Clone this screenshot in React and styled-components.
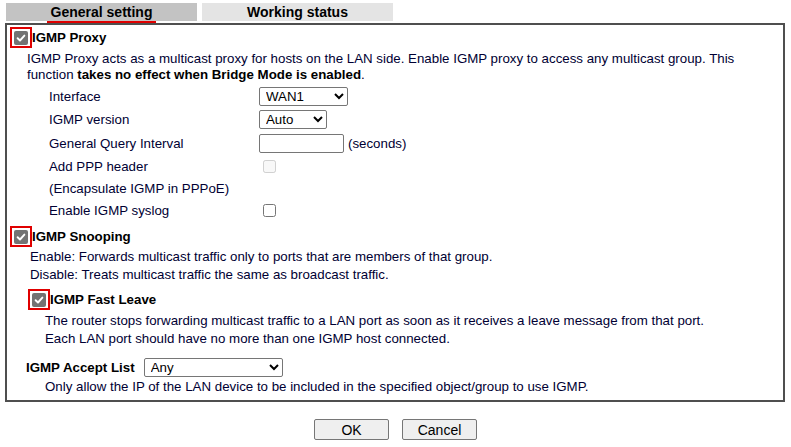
import React from 'react'
import styled, { createGlobalStyle } from 'styled-components';

const GlobalStyle = createGlobalStyle`
  body {
    margin: 0;
    background: #fff;
    font-family: "Liberation Sans", Arial, sans-serif;
    font-size: 13.3px;
    color: #000;
  }
`

const CheckMark = () => (
  <Tick>
    <svg width="10" height="10" viewBox="0 0 10 10">
      <path d="M1.6 5.2 L4 7.5 L8.4 2.6" fill="none" stroke="#fff" strokeWidth="1.9" strokeLinecap="round" strokeLinejoin="round" />
    </svg>
  </Tick>
)

const MarkedCheck = () => (
  <RedFrame>
    <CheckMark />
  </RedFrame>
)

const App = () => {
  return (
    <Page>
      <GlobalStyle />
      <TabBar>
        <Tab active><TabLabel active>General setting</TabLabel></Tab>
        <Tab>Working status</Tab>
      </TabBar>
      <Panel>
        <Heading gap={2}>
          <MarkedCheck />
          <HeadText>IGMP Proxy</HeadText>
        </Heading>
        <Desc indent={20} lh={16} top={3}>
          IGMP Proxy acts as a multicast proxy for hosts on the LAN side. Enable IGMP proxy to access any multicast group. This<br />
          function <b>takes no effect when Bridge Mode is enabled</b>.
        </Desc>
        <FormGrid>
          <Label>Interface</Label>
          <Cell>
            <Select w={89} defaultValue="WAN1">
              <option>WAN1</option>
              <option>WAN2</option>
            </Select>
          </Cell>
          <Label>IGMP version</Label>
          <Cell>
            <Select w={68} defaultValue="Auto">
              <option>Auto</option>
              <option>v2</option>
              <option>v3</option>
            </Select>
          </Cell>
          <Label>General Query Interval</Label>
          <Cell>
            <TextInput type="text" />
            <Unit>(seconds)</Unit>
          </Cell>
          <Label>Add PPP header</Label>
          <Cell><Box type="checkbox" disabled /></Cell>
          <Label>(Encapsulate IGMP in PPPoE)</Label>
          <Cell />
          <Label>Enable IGMP syslog</Label>
          <Cell><Box type="checkbox" /></Cell>
        </FormGrid>

        <Heading gap={5}>
          <MarkedCheck />
          <HeadText>IGMP Snooping</HeadText>
        </Heading>
        <Desc indent={23} lh={18} top={1}>
          Enable: Forwards multicast traffic only to ports that are members of that group.<br />
          Disable: Treats multicast traffic the same as broadcast traffic.
        </Desc>

        <Heading gap={5} indent={18}>
          <MarkedCheck />
          <HeadText>IGMP Fast Leave</HeadText>
        </Heading>
        <Desc indent={38} lh={18} top={2}>
          The router stops forwarding multicast traffic to a LAN port as soon as it receives a leave message from that port.<br />
          Each LAN port should have no more than one IGMP host connected.
        </Desc>

        <AcceptRow>
          <HeadText>IGMP Accept List</HeadText>
          <Select w={139} defaultValue="Any">
            <option>Any</option>
          </Select>
        </AcceptRow>
        <Desc indent={38} lh={18} top={1}>
          Only allow the IP of the LAN device to be included in the specified object/group to use IGMP.
        </Desc>
      </Panel>
      <Buttons>
        <Button>OK</Button>
        <Button>Cancel</Button>
      </Buttons>
    </Page>
  )
}

const Page = styled.div`
  width: 791px;
  padding-top: 3px;
`

const TabBar = styled.div`
  display: flex;
  gap: 5px;
  margin-left: 6px;
  height: 20px;
`

const Tab = styled.div`
  width: 191px;
  height: 18px;
  background: ${props => props.active ? '#c3c3c3' : '#e4e4e4'};
  display: flex;
  justify-content: center;
  font-weight: bold;
  font-size: 14px;
  line-height: 18px;
  color: #000;
`

const TabLabel = styled.span`
  display: inline-block;
  height: 18px;
  padding: 0 4px;
  border-bottom: 2px solid ${props => props.active ? '#e00000' : 'transparent'};
`

const Panel = styled.div`
  margin: 0 6px 0 5px;
  border: 2px solid #4f4f4f;
  padding: 0 0 4px 0;
  color: #000033;
`

const Heading = styled.div`
  display: flex;
  align-items: center;
  margin-top: ${props => props.gap || 0}px;
  margin-left: ${props => 3 + (props.indent || 0)}px;
  height: 21px;
`

const RedFrame = styled.span`
  display: flex;
  align-items: center;
  justify-content: center;
  width: 18px;
  height: 17px;
  border: 2px solid #e00000;
`

const Tick = styled.span`
  display: flex;
  align-items: center;
  justify-content: center;
  width: 14px;
  height: 14px;
  border-radius: 2px;
  background: #737373;
`

const HeadText = styled.span`
  font-weight: bold;
  color: #000;
`

const Desc = styled.div`
  margin-left: ${props => props.indent}px;
  margin-top: ${props => props.top || 4}px;
  line-height: ${props => props.lh}px;
  white-space: nowrap;
  b { color: #000; }
`

const FormGrid = styled.div`
  display: grid;
  grid-template-columns: 210px auto;
  grid-template-rows: 23px 23px 24px 22px 22px 22px;
  margin: 2px 0 0 42px;
  align-items: center;
`

const Label = styled.div`
  color: #000033;
`

const Cell = styled.div`
  display: flex;
  align-items: center;
  gap: 4px;
`

const Select = styled.select`
  width: ${props => props.w}px;
  height: 19px;
  font-family: "Liberation Sans", Arial, sans-serif;
  font-size: 13.3px;
  color: #000;
  border: 1px solid #767676;
  border-radius: 2px;
  background: #fff;
  padding: 0 0 0 2px;
`

const TextInput = styled.input`
  width: 85px;
  height: 19px;
  box-sizing: border-box;
  border: 1px solid #767676;
  border-radius: 2px;
  font-family: "Liberation Sans", Arial, sans-serif;
  font-size: 13.3px;
`

const Unit = styled.span`
  color: #000033;
`

const Box = styled.input`
  width: 13px;
  height: 13px;
  margin: 0 0 0 4px;
`

const AcceptRow = styled.div`
  display: flex;
  align-items: center;
  gap: 9px;
  margin: 9px 0 0 19px;
  height: 20px;
`

const Buttons = styled.div`
  display: flex;
  justify-content: center;
  gap: 13px;
  margin-top: 17px;
`

const Button = styled.button`
  width: 75px;
  height: 21px;
  font-family: "Liberation Sans", Arial, sans-serif;
  font-size: 14px;
  color: #000;
  background: #efefef;
  border: 1px solid #767676;
  border-radius: 2px;
  padding: 0;
`

export default App;
